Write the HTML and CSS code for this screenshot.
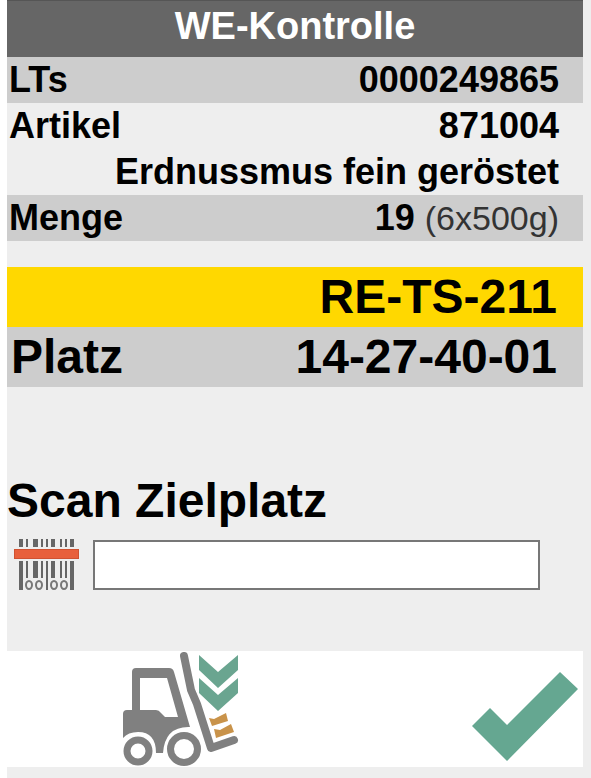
FILE: index.html
```
<!DOCTYPE html>
<html lang="de">
<head>
    <meta charset="UTF-8">
    <meta name="viewport" content="width=device-width, initial-scale=1">
    <title>WE-Kontrolle</title>
    <link rel="stylesheet" href="styles.css">
</head>
<body>
    <div class="container">
        <h1 class="header">WE-Kontrolle</h1>

        <table class="info">
            <tr class="shaded">
                <th scope="row">LTs</th>
                <td>0000249865</td>
            </tr>
            <tr>
                <th scope="row">Artikel</th>
                <td>871004</td>
            </tr>
            <tr>
                <td colspan="2">Erdnussmus fein geröstet</td>
            </tr>
            <tr class="shaded">
                <th scope="row">Menge</th>
                <td>19 <span class="unit">(6x500g)</span></td>
            </tr>
        </table>

        <table class="info target">
            <tr class="highlight">
                <td colspan="2">RE-TS-211</td>
            </tr>
            <tr class="shaded">
                <th scope="row">Platz</th>
                <td>14-27-40-01</td>
            </tr>
        </table>

        <form class="scan" id="scan-form">
            <label for="scan-input">Scan Zielplatz</label>
            <div class="scan-row">
                <svg class="barcode" viewBox="0 0 66 52" aria-hidden="true">
                    <g fill="#666">
                        <path d="M5 0h4v8h-4zM12 0h2v8h-2zM19 0h5v8h-5zM27 0h2v8h-2zM32 0h2v8h-2zM37 0h4v8h-4zM46 0h2v8h-2zM51 0h2v8h-2zM56 0h4v8h-4z"/>
                        <path d="M5 22h4v29h-4zM12 22h2v17h-2zM19 22h5v17h-5zM27 22h2v17h-2zM32 22h2v29h-2zM37 22h4v17h-4zM46 22h2v17h-2zM51 22h2v17h-2zM56 22h4v29h-4z"/>
                    </g>
                    <g fill="none" stroke="#777" stroke-width="2">
                        <ellipse cx="15" cy="46" rx="3" ry="4"/>
                        <ellipse cx="25" cy="46" rx="3" ry="4"/>
                        <ellipse cx="40" cy="46" rx="3" ry="4"/>
                        <ellipse cx="50" cy="46" rx="3" ry="4"/>
                    </g>
                    <rect x="0.5" y="10.5" width="64" height="9" fill="#e8603c" stroke="#cf5232"/>
                </svg>
                <input type="text" id="scan-input" autocomplete="off">
            </div>
        </form>

        <div class="actions">
            <button type="button" aria-label="Einlagern">
                <svg class="forklift" viewBox="0 0 118 116" aria-hidden="true">
                    <path fill="#808080" fill-rule="evenodd" d="M11 21q0-4 4-4h33q4 0 5 4l16 55Q44 75 42 102h-7Q35 81 17 81 7 81 2 87V63q0-4 4-4h5zM19 27v32h16q3 0 5 3l4 4h13L46 27z"/>
                    <circle cx="17" cy="100" r="11" fill="none" stroke="#808080" stroke-width="7"/>
                    <circle cx="63" cy="98" r="13.500" fill="none" stroke="#808080" stroke-width="7"/>
                    <path fill="none" stroke="#808080" stroke-width="8" stroke-linecap="round" stroke-linejoin="round" d="M63 5l7 34 6 14 14 44 23-8"/>
                    <path fill="#6aa590" d="M78 4l19 17 20-17v15L97 37 78 19zM78 27l19 17 20-17v15L97 60 78 42z"/>
                    <path fill="#c9934a" d="M88 67l5 1 12-6 2 8-16 5zM93 78l6 1 11-6 3 8-18 6z"/>
                </svg>
            </button>
            <button type="submit" form="scan-form" aria-label="Bestätigen">
                <svg class="check" viewBox="0 0 108 92" aria-hidden="true">
                    <path fill="#65a791" d="M1 55l18-18 17 17L89 1l18 17-71 72z"/>
                </svg>
            </button>
        </div>
    </div>
</body>
</html>
```
FILE: styles.css
```
* {
    margin: 0;
    padding: 0;
    box-sizing: border-box;
}

body {
    font-family: "Liberation Sans", Arial, Helvetica, sans-serif;
    font-size: 36px;
    font-weight: bold;
    color: #000;
    background: #fff;
    padding-left: 7px;
}

.container {
    min-height: 100vh;
    background: #eee;
    padding-right: 8px;
}

.header {
    background: #666;
    border-top: 1px solid #555;
    color: #fff;
    font-size: 38px;
    line-height: 50px;
    padding-bottom: 6px;
    text-align: center;
}

.info {
    width: 100%;
    border-collapse: collapse;
    line-height: 46px;
    margin-bottom: 26px;
}

.info th {
    text-align: left;
    padding-left: 2px;
}

.info td {
    text-align: right;
    padding-right: 24px;
}

.shaded {
    background: #cdcdcd;
}

.highlight {
    background: #ffd800;
}

.unit {
    font-size: 34px;
    font-weight: normal;
    line-height: 1;
    color: #333;
}

.target {
    font-size: 48px;
    line-height: 60px;
    margin-bottom: 84px;
}

.target th {
    padding-left: 4px;
}

.target td {
    padding-right: 26px;
}

.scan label {
    display: block;
    font-size: 48px;
    line-height: 60px;
}

.scan-row {
    display: flex;
    align-items: center;
    gap: 13px;
    padding: 8px 43px 0 7px;
}

.barcode {
    flex: none;
    width: 66px;
    height: 52px;
}

.scan input {
    flex: 1;
    min-width: 0;
    height: 50px;
    padding: 0 8px;
    border: 2px solid #777;
    background: #fff;
    font: inherit;
}

.actions {
    display: flex;
    justify-content: space-between;
    align-items: center;
    margin-top: 60px;
    padding: 0 4px 0 114px;
    background: #fff;
}

.actions button {
    border: none;
    background: none;
    cursor: pointer;
}

.actions svg {
    display: block;
}

.forklift {
    width: 118px;
    height: 116px;
}

.check {
    width: 108px;
    height: 92px;
    margin-top: 16px;
}
```
